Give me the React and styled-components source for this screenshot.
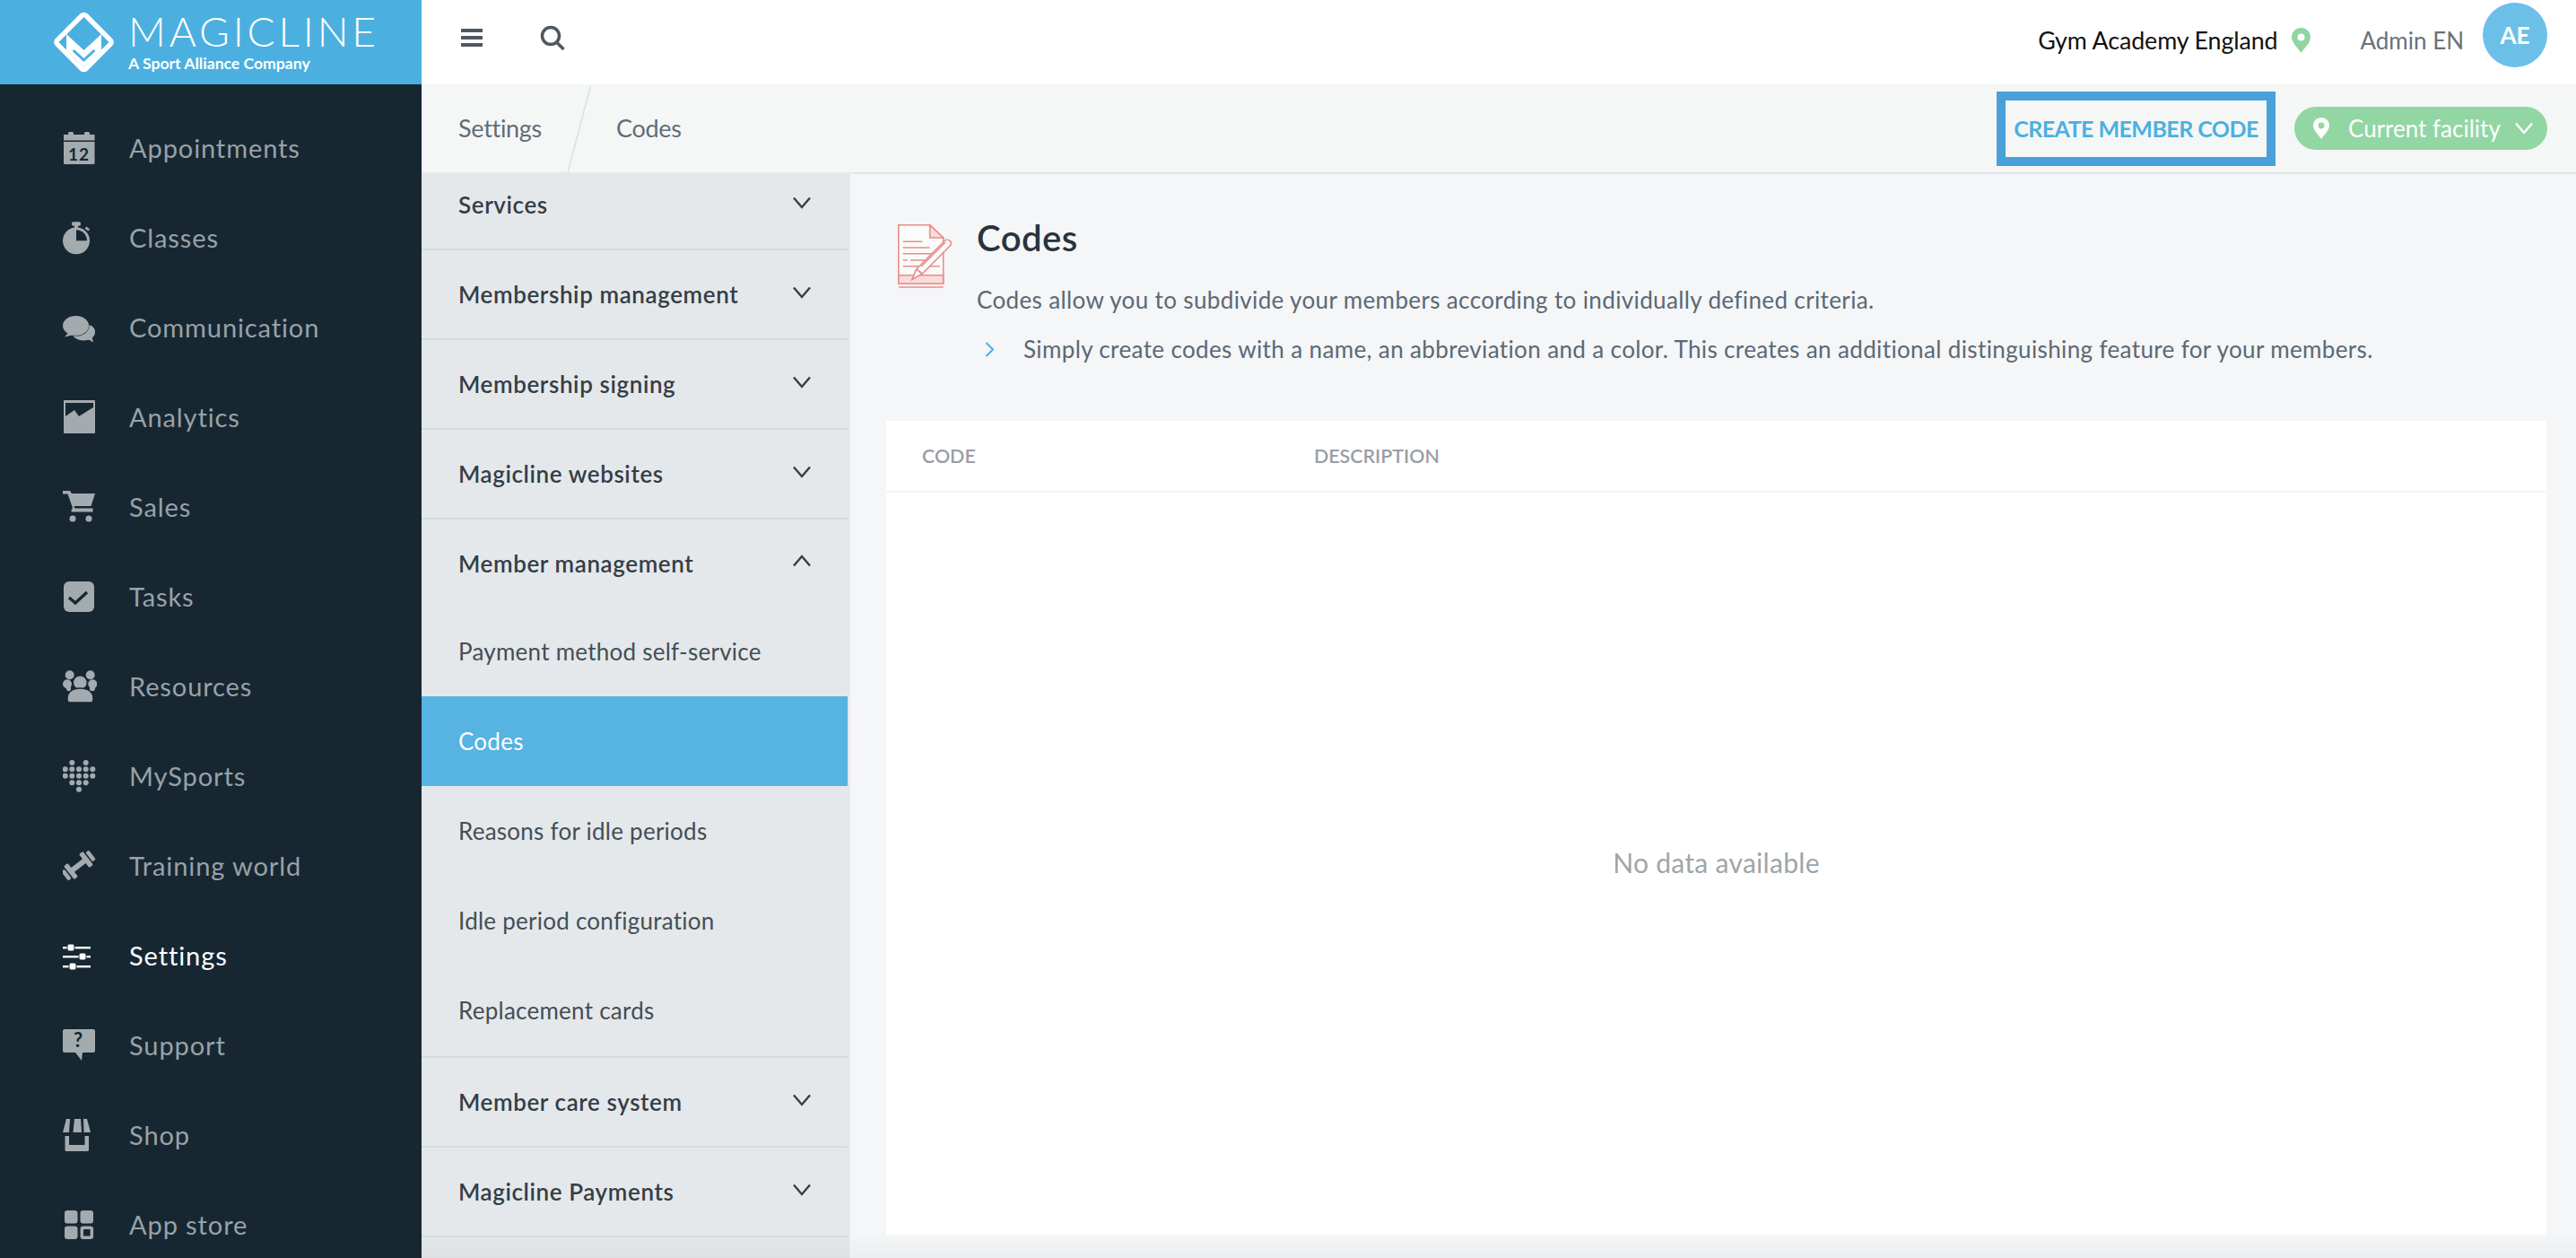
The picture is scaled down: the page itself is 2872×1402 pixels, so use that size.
import React from "react";
import styled, { createGlobalStyle } from "styled-components";

const Global = createGlobalStyle`
	html, body {
		margin: 0;
		padding: 0;
		width: 2872px;
		height: 1402px;
		overflow: hidden;
		background: #f4f6f8;
		font-family: "Lato", "Liberation Sans", sans-serif;
	}
	* {
		box-sizing: border-box;
	}
`;

const Page = styled.div`
	display: grid;
	grid-template-columns: 470px 1fr;
	width: 2872px;
	height: 1402px;
	overflow: hidden;
`;

const Sidebar = styled.aside`
	display: flex;
	flex-direction: column;
	background: #172732;
	overflow: hidden;
`;

const Brand = styled.div`
	display: flex;
	align-items: center;
	gap: 14px;
	height: 94px;
	flex: none;
	padding-left: 58px;
	background: #4bb0e0;
	color: #fff;
`;

const BrandText = styled.div`
	display: flex;
	flex-direction: column;
	gap: 5px;
`;

const BrandName = styled.div`
	font-size: 46px;
	line-height: 38px;
	font-weight: 300;
	letter-spacing: 3.9px;
	margin-top: 4px;
`;

const BrandSub = styled.div`
	font-size: 17.6px;
	line-height: 24px;
	font-weight: 700;
`;

const NavList = styled.nav`
	display: flex;
	flex-direction: column;
	padding-top: 21px;
`;

const NavItem = styled.a`
	display: flex;
	align-items: center;
	height: 100px;
	flex: none;
	padding-left: 70px;
	gap: 36px;
	font-size: 29px;
	letter-spacing: 0.9px;
	color: ${(p) => (p.$active ? "#ffffff" : "#98a2a8")};
	svg {
		flex: none;
		width: 38px;
		height: 38px;
		color: ${(p) => (p.$active ? "#ffffff" : "#a3abaf")};
	}
`;

const NavLabel = styled.span`
	margin-top: -2px;
`;

const Right = styled.div`
	display: flex;
	flex-direction: column;
	min-width: 0;
`;

const Topbar = styled.header`
	display: flex;
	align-items: center;
	height: 94px;
	flex: none;
	padding: 0 32px 4px 44px;
	background: #fff;
`;

const TopIcon = styled.span`
	display: flex;
	color: #4f5860;
	margin: -6px 64px 0 0;
`;

const TopRight = styled.div`
	display: flex;
	align-items: center;
	margin-left: auto;
`;

const Facility = styled.span`
	font-size: 26.8px;
	color: #111;
	letter-spacing: -0.1px;
	margin-right: 16px;
`;

const UserName = styled.span`
	font-size: 26px;
	color: #68727b;
	margin: 0 21px 0 55px;
`;

const Avatar = styled.span`
	display: flex;
	align-items: center;
	justify-content: center;
	width: 72px;
	height: 72px;
	margin-top: -12px;
	border-radius: 50%;
	background: #6cc0e8;
	color: #fff;
	font-size: 26px;
	font-weight: 700;
`;

const SubBar = styled.div`
	display: flex;
	align-items: center;
	height: 98px;
	flex: none;
	padding: 0 32px 0 41px;
	background: #f5f7f7;
`;

const Crumb = styled.span`
	font-size: 27px;
	color: #626d76;
	letter-spacing: -0.3px;
	margin-top: -1px;
`;

const CrumbSlash = styled.span`
	width: 26px;
	height: 98px;
	margin: 0 28px 0 29px;
	flex: none;
	background: linear-gradient(
		to bottom right,
		transparent calc(50% - 1px),
		#dfe5e8 calc(50% - 1px),
		#dfe5e8 calc(50% + 1px),
		transparent calc(50% + 1px)
	);
`;

const CreateButton = styled.button`
	width: 311px;
	height: 83px;
	margin-left: auto;
	padding: 0;
	border: 10px solid #4aa0d8;
	background: transparent;
	color: #4bb0e0;
	font-family: inherit;
	font-size: 25px;
	font-weight: 700;
	letter-spacing: -0.55px;
	white-space: nowrap;
`;

const FacilityPill = styled.button`
	display: flex;
	align-items: center;
	width: 282px;
	height: 48px;
	margin-left: 21px;
	padding: 0 0 0 21px;
	border: 0;
	border-radius: 24px;
	background: #92d6a4;
	color: #fff;
	font-family: inherit;
	font-size: 26px;
	white-space: nowrap;
	span {
		margin: 0 15px 0 21px;
	}
`;

const Body = styled.div`
	display: flex;
	flex: 1;
	min-height: 0;
`;

const Panel = styled.div`
	width: 478px;
	flex: none;
	padding-right: 2px;
	overflow: hidden;
	border-right: 1px solid #e9ecef;
	background: linear-gradient(to bottom, #e4e8eb calc(100% - 30px), #dde1e4);
`;

const PanelScroll = styled.div`
	margin-top: -13px;
`;

const Section = styled.div`
	border-bottom: 2px solid #d5dbde;
	padding-bottom: ${(p) => (p.$open ? "1px" : "0")};
`;

const SectionHead = styled.div`
	display: flex;
	align-items: center;
	justify-content: space-between;
	height: ${(p) => (p.$open ? "97px" : "98px")};
	padding: 0 40px 0 41px;
	font-size: 26px;
	font-weight: 600;
	letter-spacing: 0.6px;
	color: #353e45;
	svg {
		margin-top: -5px;
	}
`;

const SubItem = styled.div`
	display: flex;
	align-items: center;
	height: 100px;
	padding-left: 41px;
	font-size: 26px;
	letter-spacing: 0.25px;
	color: ${(p) => (p.$active ? "#ffffff" : "#454e55")};
	background: ${(p) => (p.$active ? "#56b3e2" : "transparent")};
`;

const Main = styled.main`
	display: flex;
	flex-direction: column;
	flex: 1;
	min-width: 0;
	padding: 51px 33px 26px 40px;
	border-top: 2px solid #dfe7e8;
	background: linear-gradient(to bottom, #f4f6f8 calc(100% - 30px), #eceef0);
`;

const Intro = styled.div`
	display: flex;
	gap: 28px;
	padding-left: 13px;
`;

const IntroIcon = styled.svg`
	flex: none;
	width: 60px;
	height: 71px;
	margin-top: 5px;
`;

const IntroText = styled.div`
	display: flex;
	flex-direction: column;
`;

const Title = styled.h1`
	margin: 0 0 31px;
	font-size: 40px;
	line-height: 40px;
	font-weight: 600;
	letter-spacing: 0.5px;
	color: #2a333c;
`;

const Lead = styled.p`
	margin: 0 0 19px;
	font-size: 26px;
	line-height: 36px;
	letter-spacing: 0.37px;
	color: #5c6873;
`;

const Hint = styled.p`
	display: flex;
	align-items: center;
	gap: 32px;
	margin: 0 0 0 9px;
	font-size: 26px;
	line-height: 36px;
	letter-spacing: 0.37px;
	color: #5c6873;
`;

const Card = styled.section`
	display: flex;
	flex-direction: column;
	flex: 1;
	margin-top: 62px;
	background: #fff;
`;

const CardHead = styled.div`
	display: grid;
	grid-template-columns: 437px 1fr;
	align-items: center;
	height: 80px;
	flex: none;
	padding-left: 40px;
	border-bottom: 2px solid #f3f5f7;
	font-size: 21.4px;
	font-weight: 600;
	color: #999ea3;
`;

const Empty = styled.div`
	display: flex;
	flex: 1;
	align-items: center;
	justify-content: center;
	padding-bottom: 4px;
	font-size: 30px;
	letter-spacing: 0.3px;
	color: #a0a5a8;
`;

const Chevron = ({ up, color = "#353e45" }) => (
	<svg width="22" height="14" viewBox="0 0 22 14" fill="none" stroke={color} strokeWidth="2.4">
		<path d={up ? "M2 12.5 11 2l9 10.5" : "M2 1.5 11 12l9-10.5"} />
	</svg>
);

const Pin = ({ width = 21, color }) => (
	<svg width={width} viewBox="0 0 21 28" style={{ flex: "none" }}>
		<path
			fill={color}
			fillRule="evenodd"
			d="M10.5 0C4.7 0 0 4.6 0 10.3 0 17 7.5 23 10.5 28 13.5 23 21 17 21 10.3 21 4.6 16.3 0 10.5 0Zm0 6.5a4 4 0 1 1 0 8 4 4 0 0 1 0-8Z"
		/>
	</svg>
);

const icons = {
	calendar: (
		<svg viewBox="0 0 38 38" fill="currentColor">
			<path d="M6 4V2.5A1.5 1.5 0 0 1 7.500 1h3A1.500 1.500 0 0 1 12 2.500V4h12V2.500A1.500 1.500 0 0 1 25.500 1h3A1.500 1.500 0 0 1 30 2.500V4h5.500v6.500H1V4Z" />
			<path d="M1 12h34.500v24a1 1 0 0 1-1 1H2a1 1 0 0 1-1-1Z" />
			<text x="18" y="33" textAnchor="middle" fontSize="19" fontWeight="700" fontFamily="Lato, sans-serif" fill="#172732">12</text>
		</svg>
	),
	timer: (
		<svg viewBox="0 0 38 38" fill="currentColor">
			<rect x="10" y="1.300" width="10" height="4.400" rx="1.800" />
			<rect x="13" y="5" width="4" height="4" />
			<circle cx="15" cy="22.300" r="15" />
			<path d="M26.500 6.500l3.500 3-1.500 2-4-3Z" />
			<path fill="#172732" d="M15 10.300A12 12 0 0 1 27 22.300H15Z" />
		</svg>
	),
	chat: (
		<svg viewBox="0 0 38 38" fill="currentColor">
			<ellipse cx="23" cy="24" rx="13" ry="9.500" />
			<path d="M26 31l8 4.500-2-8Z" />
			<ellipse cx="14.500" cy="17" rx="15" ry="11.500" fill="#172732" />
			<ellipse cx="14.500" cy="17" rx="14.500" ry="11" />
			<path d="M7 24l-5 5.500 11-2.500Z" />
		</svg>
	),
	chart: (
		<svg viewBox="0 0 38 38" fill="currentColor">
			<path fillRule="evenodd" d="M1 1a1 1 0 0 1 1-1h33a1 1 0 0 1 1 1v35a1 1 0 0 1-1 1H2a1 1 0 0 1-1-1ZM3 3v15l10-7 5 7 16-10V3Z" />
		</svg>
	),
	cart: (
		<svg viewBox="0 0 38 38" fill="currentColor">
			<path d="M0 1h8l2 3h26l-4.500 14H12.500l1 2.500h20v4H10.800c-1 0-1.600-1-1.300-2l1.500-2.500L5.500 4.500H0Z" />
			<circle cx="11" cy="32" r="3.500" />
			<circle cx="29" cy="32" r="3.500" />
		</svg>
	),
	check: (
		<svg viewBox="0 0 38 38" fill="currentColor">
			<rect x="1" y="2" width="34" height="34" rx="6" />
			<path fill="none" stroke="#172732" strokeWidth="3.500" d="M7 20l7 6 13-12" />
		</svg>
	),
	people: (
		<svg viewBox="0 0 38 38" fill="currentColor">
			<circle cx="7.700" cy="6.300" r="5" />
			<circle cx="30.700" cy="6.300" r="5" />
			<circle cx="5" cy="16.300" r="5" />
			<circle cx="33.300" cy="16.300" r="5" />
			<path d="M1 16h8v8H5ZM30 16h8l-3 8h-5Z" />
			<circle cx="19.300" cy="14.700" r="8" stroke="#172732" strokeWidth="1.500" />
			<path d="M5 32C5 25 11 21 19.500 21S34 25 34 32v2a3 3 0 0 1-3 3H8a3 3 0 0 1-3-3Z" stroke="#172732" strokeWidth="1.500" />
		</svg>
	),
	heart: (
		<svg viewBox="0 0 38 38" fill="currentColor">
			{[
				[10.3, 4], [25.7, 4],
				[2.7, 11.3], [10.3, 11.3], [18, 11.3], [25.7, 11.3], [33.3, 11.3],
				[2.7, 18.7], [10.3, 18.7], [18, 18.7], [25.7, 18.7], [33.3, 18.7],
				[10.3, 26.3], [18, 26.3], [25.7, 26.3],
				[18, 33.7],
			].map(([cx, cy]) => (
				<circle key={cx + "-" + cy} cx={cx} cy={cy} r="3" />
			))}
		</svg>
	),
	dumbbell: (
		<svg viewBox="0 0 38 38" fill="currentColor">
			<g transform="rotate(-38 17.500 18.500)">
				<rect x="7" y="15.500" width="21" height="6" />
				<rect x="4" y="9" width="5.500" height="19" rx="1.500" />
				<rect x="-2" y="12" width="4.500" height="13" rx="1.500" />
				<rect x="25.500" y="9" width="5.500" height="19" rx="1.500" />
				<rect x="32.500" y="12" width="4.500" height="13" rx="1.500" />
			</g>
		</svg>
	),
	sliders: (
		<svg viewBox="0 0 38 38" fill="currentColor">
			<rect x="0" y="9" width="31" height="2.400" />
			<rect x="0" y="19" width="31" height="2.400" />
			<rect x="0" y="30" width="31" height="2.400" />
			<rect x="5" y="6" width="8" height="8" rx="2" stroke="#172732" />
			<rect x="18" y="16" width="8" height="8" rx="2" stroke="#172732" />
			<rect x="7" y="27" width="8" height="8" rx="2" stroke="#172732" />
		</svg>
	),
	help: (
		<svg viewBox="0 0 38 38" fill="currentColor">
			<path d="M2 1h32a2 2 0 0 1 2 2v22a2 2 0 0 1-2 2H22l-1 9-7-9H2a2 2 0 0 1-2-2V3a2 2 0 0 1 2-2Z" />
			<text x="17.500" y="21" textAnchor="middle" fontSize="22" fontWeight="700" fontFamily="Lato, sans-serif" fill="#172732">?</text>
		</svg>
	),
	shop: (
		<svg viewBox="0 0 38 38" fill="currentColor">
			<path d="M4 1h4l-1 15H0ZM13 1h7l1 15H11.500ZM23 1h4l4 15h-7.500Z" />
			<path d="M2.500 20H7v10h17.500V20H29v15.500a1.500 1.500 0 0 1-1.500 1.500H4a1.500 1.500 0 0 1-1.500-1.500Z" />
		</svg>
	),
	apps: (
		<svg viewBox="0 0 38 38" fill="currentColor">
			<rect x="2" y="3" width="14.500" height="14.500" rx="3" />
			<rect x="19.500" y="3" width="14.500" height="14.500" rx="3" />
			<rect x="2" y="20.500" width="14.500" height="14.500" rx="3" />
			<rect x="21.300" y="22.300" width="11" height="11" rx="1.500" fill="none" stroke="currentColor" strokeWidth="3.500" />
		</svg>
	),
};

const navItems = [
	["Appointments", "calendar"],
	["Classes", "timer"],
	["Communication", "chat"],
	["Analytics", "chart"],
	["Sales", "cart"],
	["Tasks", "check"],
	["Resources", "people"],
	["MySports", "heart"],
	["Training world", "dumbbell"],
	["Settings", "sliders"],
	["Support", "help"],
	["Shop", "shop"],
	["App store", "apps"],
];

const subItems = [
	"Payment method self-service",
	"Codes",
	"Reasons for idle periods",
	"Idle period configuration",
	"Replacement cards",
];

const Logo = () => (
	<svg width="71" height="72" viewBox="0 0 71 72" style={{ flex: "none" }}>
		<path fill="#fff" d="M16 27 35.500 45 55 27V44.500L35.500 64 16 44.500Z" />
		<path fill="none" stroke="#4bb0e0" strokeWidth="3" d="M23.700 45 35.500 56 47.300 45" />
		<rect x="13" y="13.500" width="45" height="45" rx="3" transform="rotate(45 35.500 36)" fill="none" stroke="#fff" strokeWidth="5.500" />
	</svg>
);

const DocIcon = () => (
	<IntroIcon viewBox="0 0 60 71" fill="none" stroke="#e78e8a" strokeWidth="1.600">
		<path fill="#fbfbfb" d="M.8.8h34.900l15 14.200v51H.8Z" />
		<path fill="#f9dcda" d="M35.700.8V15h15ZM.8 56.700h49.900V66H.8Z" />
		<path d="M1.300 70h49.400M5.700 19.300h21.600M5.700 26h25.600M31.300 26h4.400M5.700 32.700H44M5.700 40h5M14 40h16.700M5.700 46.700h20M35 46.700h11.700" />
		<path fill="#fbfbfb" d="M52.300 18.300c1.500-1.500 4-1.500 5.700 0 1.500 1.500 1.700 3.500.8 5L27.300 55l-11.600 6.700L20.700 50Z" />
		<path d="M20.700 50l6.600 5M26 47l27-27" />
	</IntroIcon>
);

export default function App() {
	return (
		<>
			<Global />
			<Page>
				<Sidebar>
					<Brand>
						<Logo />
						<BrandText>
							<BrandName>MAGICLINE</BrandName>
							<BrandSub>A Sport Alliance Company</BrandSub>
						</BrandText>
					</Brand>
					<NavList>
						{navItems.map(([label, icon]) => (
							<NavItem key={label} $active={label === "Settings"}>
								{icons[icon]}
								<NavLabel>{label}</NavLabel>
							</NavItem>
						))}
					</NavList>
				</Sidebar>
				<Right>
					<Topbar>
						<TopIcon>
							<svg width="24" height="20" viewBox="0 0 24 20" fill="currentColor">
								<rect width="24" height="4" />
								<rect y="8" width="24" height="4" />
								<rect y="16" width="24" height="4" />
							</svg>
						</TopIcon>
						<TopIcon>
							<svg width="28" height="28" viewBox="0 0 28 28" fill="none" stroke="currentColor" strokeWidth="3.5">
								<circle cx="12" cy="12" r="9.5" />
								<path d="M18.500 19 26.500 27" />
							</svg>
						</TopIcon>
						<TopRight>
							<Facility>Gym Academy England</Facility>
							<Pin color="#8fd5a2" />
							<UserName>Admin EN</UserName>
							<Avatar>AE</Avatar>
						</TopRight>
					</Topbar>
					<SubBar>
						<Crumb>Settings</Crumb>
						<CrumbSlash />
						<Crumb>Codes</Crumb>
						<CreateButton>CREATE MEMBER CODE</CreateButton>
						<FacilityPill>
							<Pin width={18} color="#fff" />
							<span>Current facility</span>
							<Chevron color="#fff" />
						</FacilityPill>
					</SubBar>
					<Body>
						<Panel>
							<PanelScroll>
								{["Services", "Membership management", "Membership signing", "Magicline websites"].map((name) => (
									<Section key={name}>
										<SectionHead>
											{name}
											<Chevron />
										</SectionHead>
									</Section>
								))}
								<Section $open>
									<SectionHead $open>
										Member management
										<Chevron up />
									</SectionHead>
									{subItems.map((name) => (
										<SubItem key={name} $active={name === "Codes"}>
											{name}
										</SubItem>
									))}
								</Section>
								{["Member care system", "Magicline Payments"].map((name) => (
									<Section key={name}>
										<SectionHead>
											{name}
											<Chevron />
										</SectionHead>
									</Section>
								))}
							</PanelScroll>
						</Panel>
						<Main>
							<Intro>
								<DocIcon />
								<IntroText>
									<Title>Codes</Title>
									<Lead>Codes allow you to subdivide your members according to individually defined criteria.</Lead>
									<Hint>
										<svg width="11" height="17" viewBox="0 0 11 17" fill="none" stroke="#4bb0e0" strokeWidth="2">
											<path d="M1.500 1 9 8.500 1.500 16" />
										</svg>
										Simply create codes with a name, an abbreviation and a color. This creates an additional distinguishing feature for your members.
									</Hint>
								</IntroText>
							</Intro>
							<Card>
								<CardHead>
									<span>CODE</span>
									<span>DESCRIPTION</span>
								</CardHead>
								<Empty>No data available</Empty>
							</Card>
						</Main>
					</Body>
				</Right>
			</Page>
		</>
	);
}
